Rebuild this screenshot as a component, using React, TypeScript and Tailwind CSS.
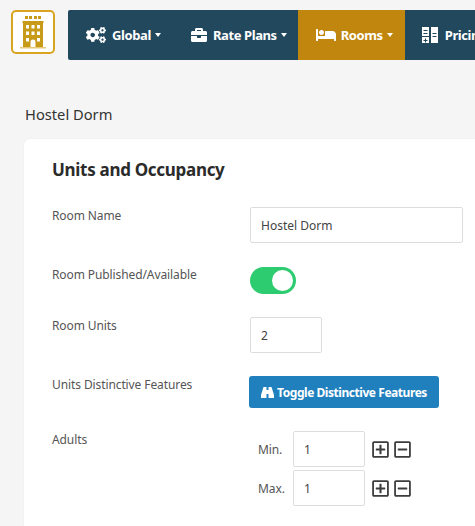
import { FaCogs, FaBriefcase, FaBed, FaRegPlusSquare, FaRegMinusSquare } from "react-icons/fa";

const font = { fontFamily: '"Noto Sans", "Open Sans", sans-serif' };

function Caret() {
  return <span className="ml-[4px] inline-block h-0 w-0 border-x-[3.5px] border-t-[4px] border-x-transparent border-t-white" />;
}

function NavItem({ icon, label, className }: { icon: React.ReactNode; label: string; className: string }) {
  return (
    <div className={`flex h-full shrink-0 items-center text-white ${className}`}>
      {icon}
      <span className="pt-[1px] text-[13px] font-bold tracking-[-0.4px]">{label}</span>
      <Caret />
    </div>
  );
}

function Stepper({ label }: { label: string }) {
  return (
    <div className="flex h-[36px] items-center">
      <span className="w-[35px] pt-[1px] text-[12px] tracking-[-0.1px] text-[#555]">{label}</span>
      <div className="flex h-[36px] w-[72px] items-center rounded-[2px] border border-[#ddd] bg-white pl-[10px] pt-[1px] text-[12px] text-[#444]">1</div>
      <FaRegPlusSquare className="ml-[6px] text-[19px] text-[#3d3d3d]" />
      <FaRegMinusSquare className="ml-[3px] text-[19px] text-[#3d3d3d]" />
    </div>
  );
}

const labelClass = "w-[198px] shrink-0 text-[12px] leading-[18px] tracking-[-0.1px] text-[#555]";

export default function App() {
  return (
    <div className="h-[526px] w-[475px] overflow-hidden bg-[#f5f5f5]" style={font}>
      <header className="flex items-start pt-[10px] pl-[11px]">
        <div className="flex h-[44px] w-[44px] shrink-0 items-center justify-center rounded-[5px] border-[2px] border-[#d9a521] bg-white">
          <svg viewBox="0 0 40 40" className="h-[40px] w-[40px]">
            <g fill="#c89a1a">
              <rect x="12" y="4" width="3" height="3" />
              <rect x="16" y="4" width="3" height="3" />
              <rect x="21" y="4" width="3" height="3" />
              <rect x="25" y="4" width="3" height="3" />
              <rect x="9.500" y="9" width="21" height="2" />
              <path fillRule="evenodd" d="M10 11h20v24H10zM13 13h3v3.500h-3zM18.500 13h3v3.500h-3zM24 13h3v3.500h-3zM13 19.500h3v3.500h-3zM18.500 19.500h3v3.500h-3zM24 19.500h3v3.500h-3zM13 26h3v3.500h-3zM24 26h3v3.500h-3zM17.500 35v-5a2.500 2.500 0 0 1 5 0v5z" />
            </g>
            <rect x="7" y="35" width="26" height="1.500" fill="#e6c878" />
          </svg>
        </div>
        <nav className="ml-[13px] flex h-[50px] w-[500px] shrink-0 items-center rounded-l-[2px] bg-[#22485e]">
          <NavItem icon={<FaCogs className="mr-[6px] text-[20px]" />} label="Global" className="pl-[18px] pr-[24px]" />
          <NavItem icon={<FaBriefcase className="mr-[6px] text-[16px]" />} label="Rate Plans" className="pl-[6px] pr-[11px]" />
          <NavItem icon={<FaBed className="mr-[5px] text-[20px]" />} label="Rooms" className="w-[107px] bg-[#c0860d] pl-[18px]" />
          <div className="flex h-full shrink-0 items-center pl-[17px] text-white">
            <svg viewBox="0 0 16 16" className="mr-[7px] h-[16px] w-[16px]">
              <path fill="#fff" d="M0 0h7v9H0zM9 0h7v16H9zM0 10h7v6H0z" />
              <path fill="#22485e" d="M1.500 3h4v1h-4zM1.500 6h4v1h-4zM10.500 6h4v1h-4zM10.500 9h4v1h-4zM1.500 13h4v1h-4zM3 11.500h1v4H3z" />
            </svg>
            <span className="pt-[1px] text-[13px] font-bold tracking-[-0.4px]">Pricing</span>
          </div>
        </nav>
      </header>

      <h1 className="mt-[43px] pl-[25px] text-[14.700px] leading-[22px] text-[#333]">Hostel Dorm</h1>

      <main className="ml-[24px] mt-[14px] h-[400px] w-[470px] rounded-[6px] bg-white pl-[28px] pt-[19px] shadow-[0_0_2px_rgba(0,0,0,0.06)]">
        <h2 className="text-[17px] font-bold leading-[24px] tracking-[-0.3px] text-[#2b2b2b]">Units and Occupancy</h2>

        <div className="mt-[25px] flex h-[36px]">
          <label className={labelClass}>Room Name</label>
          <div className="flex h-[36px] w-[213px] items-center rounded-[2px] border border-[#ddd] pl-[10px] pt-[2px] text-[12px] text-[#444]">Hostel Dorm</div>
        </div>

        <div className="mt-[24px] flex h-[27px]">
          <label className={`${labelClass} -mt-[1px]`}>Room Published/Available</label>
          <div className="flex h-[27px] w-[46px] items-center justify-end rounded-full bg-[#2ecc71] pr-[3px]">
            <span className="h-[21px] w-[21px] rounded-full bg-white" />
          </div>
        </div>

        <div className="mt-[23px] flex h-[36px]">
          <label className={labelClass}>Room Units</label>
          <div className="flex h-[36px] w-[72px] items-center rounded-[2px] border border-[#ddd] pl-[10px] pt-[2px] text-[12px] text-[#444]">2</div>
        </div>

        <div className="mt-[23px] flex h-[32px]">
          <label className={labelClass}>Units Distinctive Features</label>
          <button className="-ml-[1px] flex h-[32px] w-[190px] items-center justify-center rounded-[3px] bg-[#2080bd] pt-[1px] text-[12px] font-bold tracking-[-0.45px] text-white">
            <svg viewBox="0 0 13 11" className="mr-[3px] h-[11px] w-[13px]">
              <path fill="#fff" d="M2.500 0h3v3h1v-1h0v1h1V0h3l2.500 8v3H7.500V7h-2v4H0V8z" />
            </svg>
            Toggle Distinctive Features
          </button>
        </div>

        <div className="mt-[23px] flex">
          <label className={`${labelClass} w-[206px]!`}>Adults</label>
          <div className="flex flex-col gap-[3px]">
            <Stepper label="Min." />
            <Stepper label="Max." />
          </div>
        </div>
      </main>
    </div>
  );
}
